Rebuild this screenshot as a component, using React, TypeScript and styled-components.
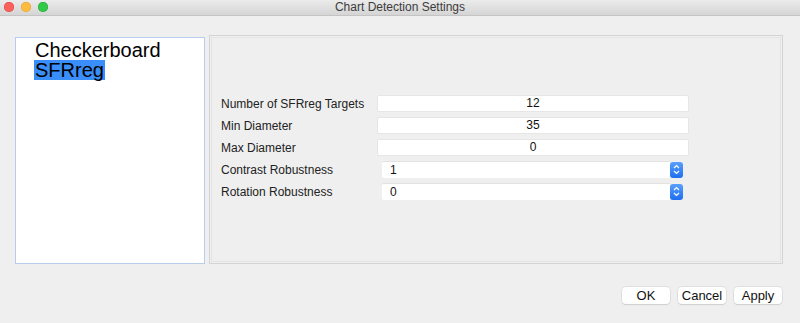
import React from "react";
import styled, { createGlobalStyle } from "styled-components";

const Global = createGlobalStyle`
  html, body { margin: 0; padding: 0; background: #efefef; }
  body { font-family: "Liberation Sans", Arial, sans-serif; width: 800px; height: 323px; overflow: hidden; }
  * { box-sizing: border-box; }
`;

const Window = styled.div`
  width: 800px;
  height: 323px;
  display: flex;
  flex-direction: column;
  background: #efefef;
`;

const TitleBar = styled.div`
  height: 16px;
  flex: none;
  border-bottom: 1px solid #c4c4c4;
  background: linear-gradient(#ebebeb, #d5d5d5);
  display: flex;
  align-items: center;
  position: relative;
`;

const Lights = styled.div`
  position: absolute;
  left: 4px;
  top: 2px;
  display: flex;
  gap: 7px;
`;

const Light = styled.span<{ $c: string; $b: string }>`
  width: 10px;
  height: 10px;
  border-radius: 50%;
  background: ${(p) => p.$c};
  box-shadow: inset 0 0 0 0.5px ${(p) => p.$b};
`;

const Title = styled.div`
  flex: 1;
  text-align: center;
  font-size: 12px;
  color: #3c3c3c;
  line-height: 15px;
`;

const Body = styled.div`
  display: flex;
  padding: 19px 17px 0 15px;
  gap: 4px;
  align-items: flex-start;
`;

const ListBox = styled.div`
  width: 190px;
  height: 227px;
  flex: none;
  margin-top: 2px;
  background: #fff;
  border: 1px solid #b8cdee;
  padding: 2px 0 0 18px;
  display: flex;
  flex-direction: column;
  align-items: flex-start;
`;

const ListItem = styled.div<{ $sel?: boolean }>`
  font-size: 20px;
  line-height: 20px;
  height: 20px;
  color: #000;
  padding: 0 1px;
  background: ${(p) => (p.$sel ? "#3a8ef9" : "transparent")};
`;

const Panel = styled.div`
  flex: 1;
  height: 229px;
  border: 1px solid #d4d4d4;
  outline: 1px solid #e4e4e4;
  outline-offset: -3px;
  background: #efefef;
  display: flex;
  align-items: center;
  padding: 0 0 4px 11px;
`;

const Form = styled.div`
  display: grid;
  grid-template-columns: 156px 312px;
  grid-auto-rows: 17px;
  row-gap: 5px;
  align-items: center;
`;

const Label = styled.div`
  font-size: 12px;
  color: #222;
  line-height: 17px;
  padding-top: 1px;
`;

const TextInput = styled.div`
  height: 17px;
  background: #fff;
  border: 1px solid #e6e6e6;
  border-radius: 2px;
  font-size: 12px;
  line-height: 15px;
  text-align: center;
  color: #111;
`;

const Combo = styled.div`
  margin-left: 5px;
  width: 306px;
  height: 17px;
  display: flex;
  align-items: center;
`;

const ComboField = styled.div`
  flex: 1;
  height: 17px;
  background: #fff;
  border-top: 1px solid #e2e2e2;
  border-radius: 2px 0 0 2px;
  font-size: 12px;
  line-height: 17px;
  padding-left: 8px;
  color: #111;
`;

const Stepper = styled.div`
  width: 13px;
  height: 16px;
  border-radius: 3px;
  background: linear-gradient(#5aa0fb, #1e6ef0);
  display: flex;
  align-items: center;
  justify-content: center;
  margin-right: 5px;
`;

const Footer = styled.div`
  display: flex;
  justify-content: flex-end;
  gap: 8px;
  padding: 23px 18px 0 0;
`;

const Button = styled.button`
  width: 48px;
  height: 17px;
  padding: 0;
  border: none;
  border-radius: 4px;
  background: #fff;
  box-shadow: 0 0 0 0.5px #cfcfcf, 0 1px 1px rgba(0, 0, 0, 0.12);
  font-family: "Liberation Sans", Arial, sans-serif;
  font-size: 13px;
  line-height: 17px;
  color: #111;
`;

const Arrows = () => (
  <svg width="7" height="11" viewBox="0 0 7 11">
    <path d="M1 4 L3.5 1.5 L6 4 M1 7 L3.5 9.5 L6 7" fill="none" stroke="#fff" strokeWidth="1.2" />
  </svg>
);

export default function App() {
  return (
    <>
      <Global />
      <Window>
        <TitleBar>
          <Lights>
            <Light $c="#fc605b" $b="#de4a45" />
            <Light $c="#fdbc40" $b="#dea236" />
            <Light $c="#34c84a" $b="#27aa35" />
          </Lights>
          <Title>Chart Detection Settings</Title>
        </TitleBar>
        <Body>
          <ListBox>
            <ListItem>Checkerboard</ListItem>
            <ListItem $sel>SFRreg</ListItem>
          </ListBox>
          <Panel>
            <Form>
              <Label>Number of SFRreg Targets</Label>
              <TextInput>12</TextInput>
              <Label>Min Diameter</Label>
              <TextInput>35</TextInput>
              <Label>Max Diameter</Label>
              <TextInput>0</TextInput>
              <Label>Contrast Robustness</Label>
              <Combo>
                <ComboField>1</ComboField>
                <Stepper><Arrows /></Stepper>
              </Combo>
              <Label>Rotation Robustness</Label>
              <Combo>
                <ComboField>0</ComboField>
                <Stepper><Arrows /></Stepper>
              </Combo>
            </Form>
          </Panel>
        </Body>
        <Footer>
          <Button>OK</Button>
          <Button>Cancel</Button>
          <Button>Apply</Button>
        </Footer>
      </Window>
    </>
  );
}
